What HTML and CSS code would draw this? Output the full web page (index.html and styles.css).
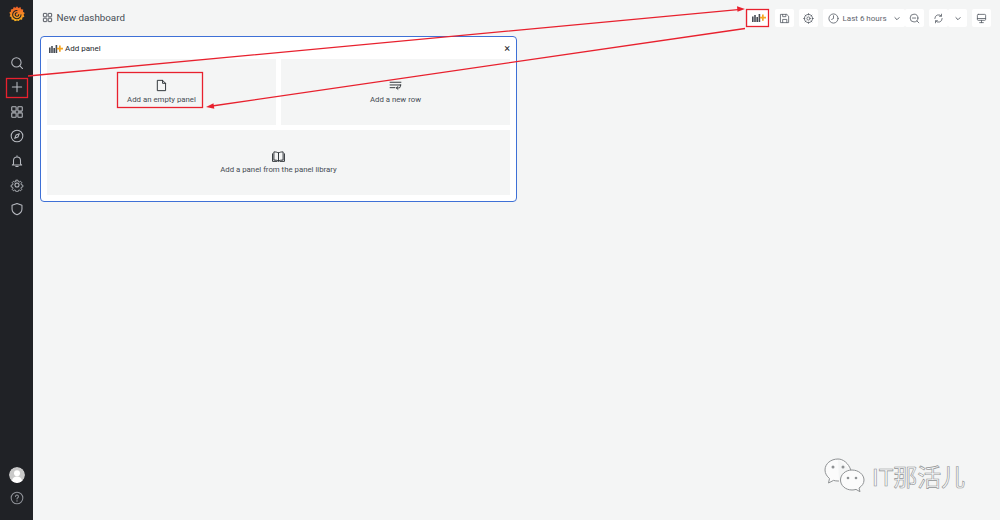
FILE: index.html
```html
<!DOCTYPE html>
<html lang="en">
<head>
<meta charset="utf-8">
<title>New dashboard</title>
<link rel="stylesheet" href="styles.css">
</head>
<body>
<div class="app">
  <nav class="sidebar">
    <div class="logo">
      <svg viewBox="0 0 18 18" width="16" height="16"><defs><linearGradient id="g" x1="0" y1="1" x2="0" y2="0"><stop offset="0" stop-color="#f9b51f"/><stop offset="1" stop-color="#ef5a28"/></linearGradient></defs><path fill="url(#g)" d="M9 .3l1.600 1.900 2.400-1 .5 2.400 2.500.4-.3 2.500 2 1.400-1.300 2 .9 2.100-2.200 1-.4 2.400-2.400-.1-1.400 1.700L9 16.200l-2.400.9-1.300-1.700-2.400-.2-.2-2.500L.7 11.600l.8-2.300L.3 7.600l1.900-1.300-.1-2.500 2.400-.4.800-2.300 2.200 1z"/><path fill="none" stroke="#202226" stroke-width="1.200" stroke-linecap="round" d="M13.500 9.800A4.700 4.700 0 1 1 9 5M11 9.500A2 2 0 1 1 9 7.500"/></svg>
    </div>
    <ul class="nav-top">
      <li><svg class="ic" viewBox="0 0 24 24"><circle cx="11" cy="11" r="8"/><path d="M17 17l4.500 4.500"/></svg></li>
      <li><svg class="ic" viewBox="0 0 24 24"><path d="M12 4v16M4 12h16"/></svg></li>
      <li><svg class="ic" viewBox="0 0 24 24"><rect x="3" y="3" width="7.500" height="7.500" rx="1"/><rect x="13.500" y="3" width="7.500" height="7.500" rx="1"/><rect x="3" y="13.500" width="7.500" height="7.500" rx="1"/><rect x="13.500" y="13.500" width="7.500" height="7.500" rx="1"/></svg></li>
      <li><svg class="ic" viewBox="0 0 24 24"><circle cx="12" cy="12" r="10"/><path d="M16 8l-2.400 5.600L8 16l2.400-5.600z"/></svg></li>
      <li><svg class="ic" viewBox="0 0 24 24"><path d="M6 17v-6a6 6 0 0 1 12 0v6l2 2H4zM12 3v2M10 21.500h4"/></svg></li>
      <li><svg class="ic" viewBox="0 0 24 24"><circle cx="12" cy="12" r="3.500"/><path d="M10.200 2.500h3.600l.6 2.800 2 .9 2.500-1.500 2.400 2.500-1.500 2.500.8 2 2.900.6v3.400l-2.900.6-.8 2 1.500 2.500-2.400 2.500-2.500-1.500-2 .9-.6 2.800h-3.600l-.6-2.800-2-.9-2.500 1.500-2.400-2.500 1.500-2.500-.8-2-2.900-.6v-3.400l2.900-.6.8-2-1.500-2.500 2.400-2.500 2.500 1.500 2-.9z" transform="translate(1.500 1.500) scale(.875)"/></svg></li>
      <li><svg class="ic" viewBox="0 0 24 24"><path d="M12 2.500l8.500 3v6.500c0 5-3.500 8-8.500 10-5-2-8.500-5-8.500-10V5.500z"/></svg></li>
    </ul>
    <ul class="nav-bottom">
      <li><span class="avatar"><svg viewBox="0 0 16 16" width="16" height="16"><circle cx="8" cy="8" r="8" fill="#c9c9c9"/><circle cx="8" cy="6.200" r="3" fill="#fff"/><path d="M2.800 14c.6-3.200 2.700-4.600 5.200-4.600s4.600 1.400 5.200 4.600A8 8 0 0 1 8 16a8 8 0 0 1-5.200-2z" fill="#fff"/></svg></span></li>
      <li><svg class="ic ic-help" viewBox="0 0 24 24"><circle cx="12" cy="12" r="10"/><path d="M9.500 9.500a2.500 2.500 0 1 1 3.800 2.100c-.9.600-1.300 1-1.300 2M12 16.500v1"/></svg></li>
    </ul>
  </nav>
  <main class="main">
    <header class="topbar">
      <div class="title">
        <svg class="ic-dark" viewBox="0 0 24 24" width="11" height="11"><rect x="3" y="3" width="7.500" height="7.500" rx="1"/><rect x="13.500" y="3" width="7.500" height="7.500" rx="1"/><rect x="3" y="13.500" width="7.500" height="7.500" rx="1"/><rect x="13.500" y="13.500" width="7.500" height="7.500" rx="1"/></svg>
        <span>New dashboard</span>
      </div>
      <div class="tools">
        <button class="btn btn-add"><svg viewBox="0 0 14 9" width="14" height="9"><path fill="#464c54" d="M0 3.500h1.600V9H0zM2.200 2h1.600v7H2.200zM4.400 4h1.600v5H4.400zM6.600 1h1.600v8H6.600z"/><path fill="#f5a623" d="M10 1.500h1.700v2.300H14v1.700h-2.300v2.300H10V5.500H7.900V3.800H10z"/></svg></button>
        <button class="btn"><svg class="ic-tool" viewBox="0 0 24 24"><path d="M4 3h13l4 4v14H4zM8 3v5h7V3M8 21v-7h9v7"/></svg></button>
        <button class="btn"><svg class="ic-tool" viewBox="0 0 24 24"><circle cx="12" cy="12" r="3.500"/><circle cx="12" cy="12" r="9"/><path d="M12 1.500v2.500M12 20v2.500M1.500 12H4M20 12h2.500M4.600 4.600l1.800 1.800M17.600 17.600l1.800 1.800M4.600 19.400l1.800-1.800M17.600 6.400l1.800-1.800"/></svg></button>
        <div class="group">
          <button class="btn btn-time"><svg class="ic-tool" viewBox="0 0 24 24"><circle cx="12" cy="12" r="10"/><path d="M12 6v6l-4 2"/></svg><span>Last 6 hours</span><svg class="chev" viewBox="0 0 10 6"><path d="M2 1.500l3 3 3-3"/></svg></button>
          <button class="btn"><svg class="ic-tool" viewBox="0 0 24 24"><circle cx="11" cy="11" r="8.500"/><path d="M17.500 17.500l4 4M7.500 11h7"/></svg></button>
        </div>
        <div class="group">
          <button class="btn"><svg class="ic-tool" viewBox="0 0 24 24"><path d="M20 12a8 8 0 0 1-14 5.300M4 12a8 8 0 0 1 14-5.300M18.500 2.500v4.500H14M5.500 21.500V17H10"/></svg></button>
          <button class="btn"><svg class="chev" viewBox="0 0 10 6"><path d="M2 1.500l3 3 3-3"/></svg></button>
        </div>
        <button class="btn"><svg class="ic-tool" viewBox="0 0 24 24"><rect x="3" y="3" width="18" height="13" rx="2"/><path d="M3 12h18M8 21h8M12 16v5"/></svg></button>
      </div>
    </header>
    <section class="panel">
      <div class="panel-head">
        <div class="panel-title">
          <svg viewBox="0 0 14 9" width="14" height="9"><path fill="#464c54" d="M0 3.500h1.600V9H0zM2.200 2h1.600v7H2.200zM4.400 4h1.600v5H4.400zM6.600 1h1.600v8H6.600z"/><path fill="#f5a623" d="M10 1.500h1.700v2.300H14v1.700h-2.300v2.300H10V5.500H7.900V3.800H10z"/></svg>
          <span>Add panel</span>
        </div>
        <span class="close">×</span>
      </div>
      <div class="tiles">
        <div class="tile">
          <svg class="ic-tile" viewBox="0 0 24 24"><path d="M5 2.500h9l5.500 5.500v13.500H5zM14 2.500V8h5.500"/></svg>
          <span>Add an empty panel</span>
        </div>
        <div class="tile">
          <svg class="ic-tile" viewBox="0 0 24 24"><path d="M2 6h20M2 11h20M2 16h9M21 11v2.500a3 3 0 0 1-3 3h-4M16.500 14l-3 2.500 3 2.500"/></svg>
          <span>Add a new row</span>
        </div>
        <div class="tile tile-wide">
          <svg class="ic-tile" viewBox="0 0 24 24"><path d="M12 5.500c-2-1.500-5-2-8.500-2v15c3.500 0 6.500.5 8.500 2 2-1.500 5-2 8.500-2v-15c-3.500 0-6.500.5-8.500 2zM12 5.500v15M1 7v14h8M23 7v14h-8"/></svg>
          <span>Add a panel from the panel library</span>
        </div>
      </div>
    </section>
  </main>
</div>
<svg class="notes" viewBox="0 0 1000 520" width="1000" height="520">
  <g class="mark">
    <rect x="6.500" y="78.500" width="21" height="19"/>
    <rect x="746.500" y="9.500" width="22" height="17"/>
    <rect x="117.500" y="72.500" width="85" height="35"/>
    <path d="M28 76L738 9.600M745 28.500L212 106"/>
  </g>
  <path class="head" d="M745 9l-8-2.800.5 5.600zM206 107l7.500-3.800.8 5.600z"/>
</svg>
<div class="watermark">
  <svg viewBox="0 0 44 36" width="44" height="36"><path class="wm" d="M15 2C8 2 2 6.500 2 13c0 3.500 2 6.500 4.500 8.500L5.500 26l5-2.600c1.500.4 3 .6 4.500.6h1M28 13.500C25.500 6 20 2 15 2"/><path class="wm" d="M29 13c-6.500 0-11.500 4.500-11.500 10S22.500 33 29 33c1.500 0 2.500-.2 4-.6l4 2.300-1-3.700c3-2 5-4.500 5-8 0-5.500-5.500-10-12-10z"/><circle class="wm-dot" cx="10" cy="10" r="1.500"/><circle class="wm-dot" cx="20" cy="10" r="1.500"/><circle class="wm-dot" cx="25" cy="21" r="1.300"/><circle class="wm-dot" cx="33" cy="21" r="1.300"/></svg>
  <span>IT那活儿</span>
</div>
</body>
</html>
```
FILE: styles.css
```css
* { box-sizing: border-box; }
html, body { margin: 0; height: 100%; overflow: hidden; }
body { background: #f4f5f5; font-family: Roboto, "Liberation Sans", sans-serif; color: #464c54; }
ul { list-style: none; margin: 0; padding: 0; }
svg { display: block; }
.app { display: flex; height: 520px; }
.sidebar { width: 33px; flex: none; background: #202226; display: flex; flex-direction: column; align-items: center; padding-top: 6px; }
.logo { height: 16px; margin-bottom: 34px; }
.nav-top { display: flex; flex-direction: column; gap: 10.400px; }
.nav-top li, .nav-bottom li { width: 14px; height: 14px; display: flex; align-items: center; justify-content: center; }
.nav-bottom { margin-top: auto; display: flex; flex-direction: column; align-items: center; gap: 9px; padding-bottom: 15px; }
.ic { width: 14px; height: 14px; flex: none; fill: none; stroke: #b7bac0; stroke-width: 1.800; stroke-linecap: round; stroke-linejoin: round; }
.ic-help { stroke: #8f9298; }
.avatar { width: 16px; height: 16px; flex: none; border-radius: 50%; overflow: hidden; }
.main { flex: 1; min-width: 0; padding: 9px 9px 0 7px; display: flex; flex-direction: column; }
.topbar { display: flex; justify-content: space-between; height: 18px; margin-bottom: 9px; }
.title { display: flex; align-items: center; gap: 3.500px; padding-left: 2px; font-size: 9.800px; color: #464c54; height: 17px; }
.ic-dark { fill: none; stroke: #464c54; stroke-width: 2; }
.tools { display: flex; gap: 5px; }
.group { display: flex; }
.btn { height: 18px; min-width: 19px; padding: 0; border: 0; background: #fff; display: flex; align-items: center; justify-content: center; font: inherit; color: #464c54; border-radius: 2px; }
.btn-add { width: 22px; padding-bottom: 1px; }
.btn-time { width: 82px; gap: 3.500px; justify-content: flex-start; padding-left: 5px; font-size: 8px; font-weight: 400; color: #5f656e; }
.btn-time .chev { margin-left: 2.500px; }
.ic-tool { width: 11px; height: 11px; fill: none; stroke: #5a6068; stroke-width: 1.800; stroke-linecap: round; stroke-linejoin: round; }
.chev { width: 8px; height: 5px; fill: none; stroke: #5a6068; stroke-width: 1.200; }
.panel { width: 477px; height: 166px; background: #fff; border: 1.500px solid #3e70d6; border-radius: 4px; padding: 0 6px; }
.panel-head { height: 22px; display: flex; align-items: center; justify-content: space-between; padding-left: 2px; }
.panel-title { display: flex; align-items: center; gap: 2px; font-size: 8px; color: #24292e; }
.close { font-size: 11px; line-height: 1; color: #24292e; }
.tiles { display: grid; grid-template-columns: 229px 229px; grid-auto-rows: 65.500px; gap: 5px; }
.tile { background: #f4f5f5; display: flex; flex-direction: column; align-items: center; justify-content: center; gap: 2.500px; font-size: 7.800px; color: #464c54; padding-bottom: 1px; }
.tile-wide { grid-column: 1 / 3; }
.ic-tile { width: 13px; height: 13px; fill: none; stroke: #24292e; stroke-width: 1.700; stroke-linejoin: round; stroke-linecap: round; }
.notes { position: absolute; left: 0; top: 0; pointer-events: none; }
.mark { fill: none; stroke: #e8212e; stroke-width: 1.300; }
.head { fill: #e8212e; }
.watermark { position: absolute; left: 823px; top: 457px; display: flex; align-items: center; gap: 5px; font-family: "Liberation Sans", "Noto Sans CJK SC", sans-serif; font-size: 24px; color: #fbfbfb; -webkit-text-stroke: .6px #8f9294; }
.wm { fill: #fbfbfb; stroke: #8f9294; stroke-width: 1; }
.wm-dot { fill: #8f9294; }
```
